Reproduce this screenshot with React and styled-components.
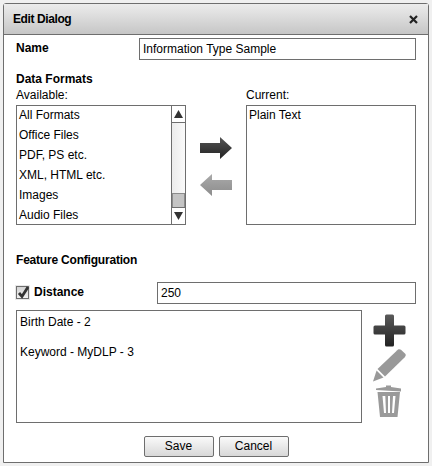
import React from "react";
import styled, { createGlobalStyle } from "styled-components";

const GlobalStyle = createGlobalStyle`
  html, body {
    margin: 0;
    padding: 0;
    background: #f0f0f0;
  }
  * {
    box-sizing: border-box;
  }
`;

const Page = styled.div`
  width: 432px;
  height: 466px;
  padding: 3px 3px 3px 3px;
  font-family: "Liberation Sans", Arial, sans-serif;
  font-size: 12px;
  color: #000;
`;

const Dialog = styled.div`
  width: 426px;
  height: 460px;
  border: 1px solid #6e6e6e;
  border-radius: 3px 3px 0 0;
  background: #fff;
  display: flex;
  flex-direction: column;
`;

const Header = styled.div`
  height: 31px;
  flex: none;
  display: flex;
  align-items: center;
  justify-content: space-between;
  padding: 0 10px 0 9px;
  border-bottom: 1px solid #6e6e6e;
  background: linear-gradient(#ececec, #c6c6c6);
  font-weight: bold;
`;

const Title = styled.span`
  letter-spacing: -0.4px;
`;

const Body = styled.div`
  flex: 1;
  padding: 3px 12px 0 12px;
  display: flex;
  flex-direction: column;
`;

const NameRow = styled.div`
  display: flex;
  justify-content: space-between;
  align-items: flex-start;
  height: 22px;
`;

const Strong = styled.div`
  font-weight: bold;
  line-height: 14px;
  margin-top: ${(p) => p.$top || 0}px;
  letter-spacing: ${(p) => p.$spacing || 0}px;
`;

const TextInput = styled.div`
  width: ${(p) => p.$width}px;
  height: 22px;
  border: 1px solid #6e6e6e;
  padding: 0 3px;
  line-height: 20px;
  background: #fff;
`;

const Columns = styled.div`
  display: flex;
  margin-top: 2px;
`;

const Column = styled.div`
  width: 170px;
`;

const Caption = styled.div`
  line-height: 14px;
  height: 17px;
`;

const ListBox = styled.div`
  height: 120px;
  border: 1px solid #6e6e6e;
  display: flex;
`;

const Items = styled.div`
  flex: 1;
  padding-left: 2px;
`;

const Item = styled.div`
  height: 20px;
  line-height: 18px;
`;

const ScrollBar = styled.div`
  width: 14px;
  border-left: 1px solid #6e6e6e;
  display: flex;
  flex-direction: column;
  background: linear-gradient(90deg, #ececec, #fafafa);
`;

const ScrollButton = styled.div`
  height: 17px;
  flex: none;
  display: flex;
  align-items: center;
  justify-content: center;
  background: #fff;
  border-${(p) => (p.$up ? "bottom" : "top")}: 1px solid #6e6e6e;
`;

const ScrollTrack = styled.div`
  flex: 1;
  display: flex;
  flex-direction: column;
  justify-content: flex-end;
`;

const ScrollThumb = styled.div`
  height: 14px;
  background: #c4c4c4;
  border: 1px solid #8c8c8c;
  border-bottom: none;
`;

const Transfer = styled.div`
  width: 60px;
  display: flex;
  flex-direction: column;
  align-items: center;
  padding-top: 49px;
  gap: 15px;
`;

const DistanceRow = styled.div`
  display: flex;
  align-items: flex-start;
  margin-top: 15px;
`;

const CheckBox = styled.div`
  width: 13px;
  height: 13px;
  margin: 4px 5px 0 0;
  border: 1px solid #6e6e6e;
  background: linear-gradient(#d4d4d4, #f0f0f0);
  position: relative;
  box-shadow: 0 0 0 1px #e8e8e8;
`;

const CheckMark = styled.svg`
  position: absolute;
  left: 0;
  top: -2px;
`;

const DistanceLabel = styled.div`
  width: 123px;
  font-weight: bold;
  line-height: 14px;
  margin-top: 3px;
`;

const FeatureRow = styled.div`
  display: flex;
  margin-top: 6px;
`;

const FeatureList = styled.div`
  width: 346px;
  height: 113px;
  border: 1px solid #6e6e6e;
  padding: 4px 3px;
`;

const Feature = styled.div`
  line-height: 14px;
  height: 30px;
`;

const Tools = styled.div`
  flex: 1;
  display: flex;
  flex-direction: column;
  align-items: center;
  padding: 4px 0 0 0;
`;

const Footer = styled.div`
  display: flex;
  justify-content: center;
  gap: 5px;
  margin-top: 13px;
`;

const Button = styled.div`
  width: 70px;
  height: 21px;
  border: 1px solid #6e6e6e;
  border-radius: 2px;
  background: linear-gradient(#fafafa, #d8d8d8);
  text-align: center;
  line-height: 19px;
`;

const Triangle = ({ up }) => (
  <svg width="9" height="8" viewBox="0 0 9 8">
    <path d={up ? "M4.5 0L9 8H0z" : "M0 0H9L4.5 8z"} fill="#333" />
  </svg>
);

const Arrow = ({ left, id, top, bottom }) => (
  <svg width="32" height="22" viewBox="0 0 32 22">
    <defs>
      <linearGradient id={id} x1="0" y1="0" x2="0" y2="1">
        <stop offset="0" stopColor={top} />
        <stop offset="1" stopColor={bottom} />
      </linearGradient>
    </defs>
    <path
      d={left ? "M12 0V6H32V16H12V22L0 11z" : "M20 0V6H0V16H20V22L32 11z"}
      fill={`url(#${id})`}
    />
  </svg>
);

const PlusIcon = () => (
  <svg width="33" height="33" viewBox="0 0 33 33">
    <defs>
      <linearGradient id="plus" x1="0" y1="0" x2="0" y2="1">
        <stop offset="0" stopColor="#5a5a5a" />
        <stop offset="1" stopColor="#222" />
      </linearGradient>
    </defs>
    <path
      d="M12 2a1.5 1.5 0 0 1 1.5-1.5h6A1.5 1.5 0 0 1 21 2V11.5H31a1.5 1.5 0 0 1 1.5 1.5v6a1.5 1.5 0 0 1-1.5 1.5H21V31a1.5 1.5 0 0 1-1.5 1.5h-6A1.5 1.5 0 0 1 12 31V20.5H2A1.5 1.5 0 0 1 .5 19v-6A1.5 1.5 0 0 1 2 11.5H12z"
      fill="url(#plus)"
    />
  </svg>
);

const PencilIcon = () => (
  <svg width="33" height="33" viewBox="0 0 33 33" style={{ marginTop: 2 }}>
    <path d="M24 1.5L31.5 8.5L12 27.5L4.5 20z" fill="#999" />
    <path d="M25 .5c1-.5 2-.5 3 .3l4 3.7c1 1 1 2 .2 3L31 9L23.5 2z" fill="#999" />
    <path d="M3.6 21.5L10.5 28.5L0 32.5z" fill="#999" />
  </svg>
);

const TrashIcon = () => (
  <svg width="26" height="33" viewBox="0 0 26 33" style={{ marginTop: 3 }}>
    <path d="M0 3.5L10 2V.5h5V2l10 1.5V6.5L0 5z" fill="#9a9a9a" />
    <path
      fillRule="evenodd"
      d="M1.5 7H24L21.5 32H4zM6.5 11L8 28H10L9.3 11zM12 11V28H14V11zM17 11L16 28H18L19.5 11z"
      fill="#9a9a9a"
    />
  </svg>
);

const formats = [
  "All Formats",
  "Office Files",
  "PDF, PS etc.",
  "XML, HTML etc.",
  "Images",
  "Audio Files",
];

export default function App() {
  return (
    <>
      <GlobalStyle />
      <Page>
        <Dialog>
          <Header>
            <Title>Edit Dialog</Title>
            <svg width="9" height="9" viewBox="0 0 9 9">
              <path d="M1 1L8 8M8 1L1 8" stroke="#222" strokeWidth="2.2" />
            </svg>
          </Header>
          <Body>
            <NameRow>
              <Strong $top={3}>Name</Strong>
              <TextInput $width={277}>Information Type Sample</TextInput>
            </NameRow>
            <Strong $top={12}>Data Formats</Strong>
            <Columns>
              <Column>
                <Caption>Available:</Caption>
                <ListBox>
                  <Items>
                    {formats.map((f) => (
                      <Item key={f}>{f}</Item>
                    ))}
                  </Items>
                  <ScrollBar>
                    <ScrollButton $up>
                      <Triangle up />
                    </ScrollButton>
                    <ScrollTrack>
                      <ScrollThumb />
                    </ScrollTrack>
                    <ScrollButton>
                      <Triangle />
                    </ScrollButton>
                  </ScrollBar>
                </ListBox>
              </Column>
              <Transfer>
                <Arrow id="arrowDark" top="#555555" bottom="#222222" />
                <Arrow id="arrowLight" left top="#aaaaaa" bottom="#8c8c8c" />
              </Transfer>
              <Column>
                <Caption>Current:</Caption>
                <ListBox>
                  <Items>
                    <Item>Plain Text</Item>
                  </Items>
                </ListBox>
              </Column>
            </Columns>
            <Strong $top={28} $spacing={-0.2}>Feature Configuration</Strong>
            <DistanceRow>
              <CheckBox>
                <CheckMark width="13" height="14" viewBox="0 0 13 14">
                  <path d="M2 8L5 11.5L11 2" fill="none" stroke="#333" strokeWidth="2.8" />
                </CheckMark>
              </CheckBox>
              <DistanceLabel>Distance</DistanceLabel>
              <TextInput $width={259}>250</TextInput>
            </DistanceRow>
            <FeatureRow>
              <FeatureList>
                <Feature>Birth Date - 2</Feature>
                <Feature>Keyword - MyDLP - 3</Feature>
              </FeatureList>
              <Tools>
                <PlusIcon />
                <PencilIcon />
                <TrashIcon />
              </Tools>
            </FeatureRow>
            <Footer>
              <Button>Save</Button>
              <Button>Cancel</Button>
            </Footer>
          </Body>
        </Dialog>
      </Page>
    </>
  );
}
